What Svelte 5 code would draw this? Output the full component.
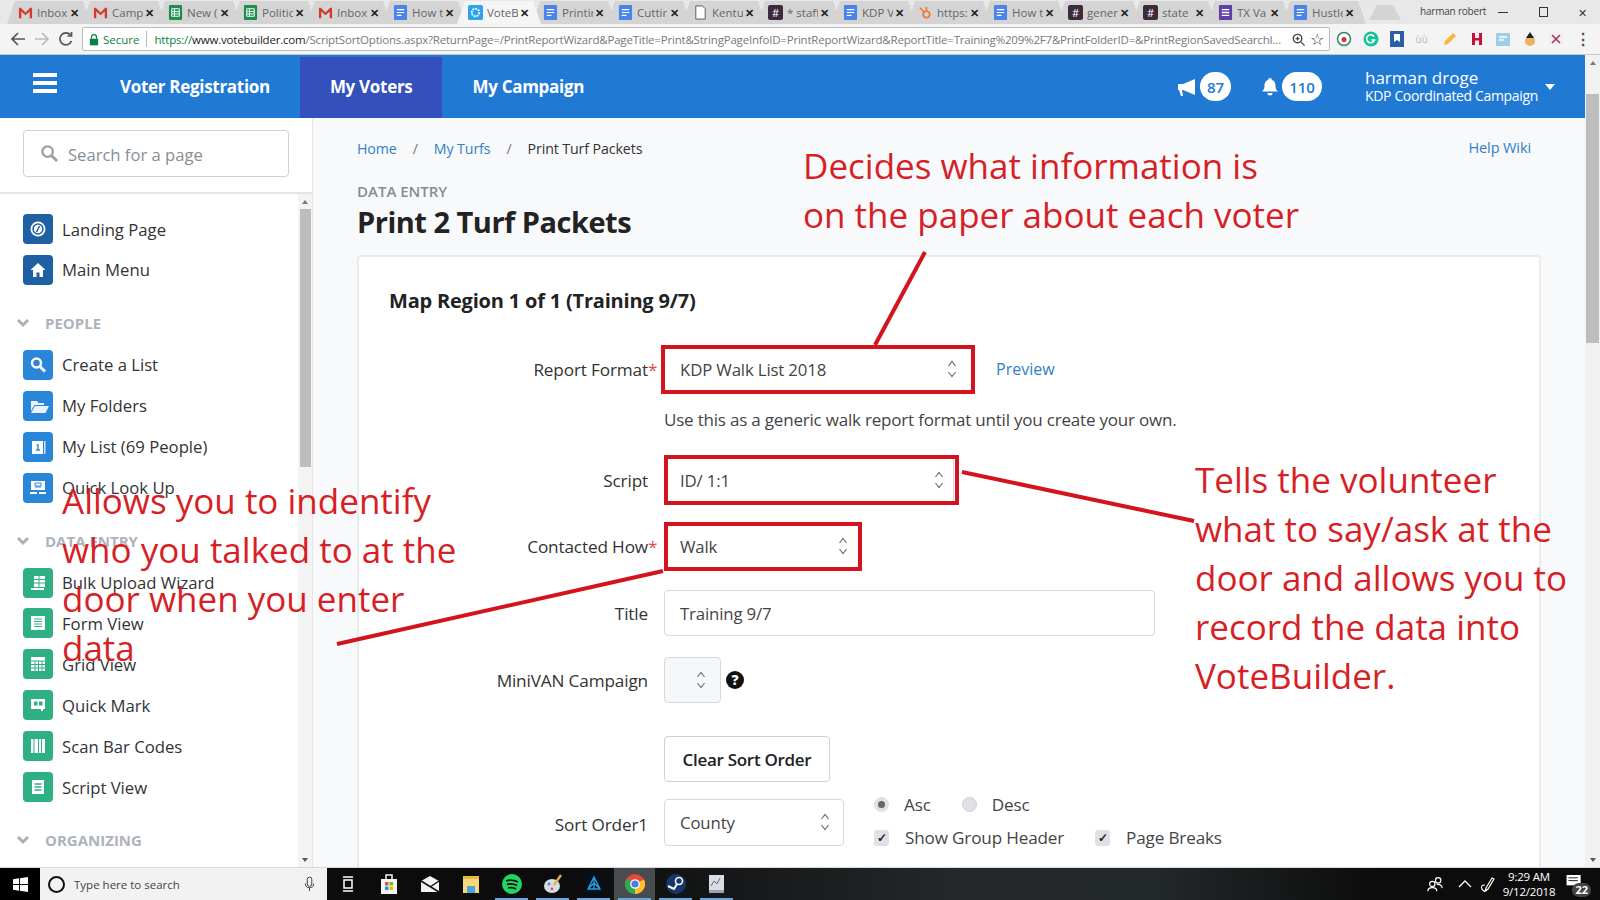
<script>
	const tabs = [
		{ kind: 'gmail', label: 'Inbox' },
		{ kind: 'gmail', label: 'Camp' },
		{ kind: 'sheet', label: 'New (' },
		{ kind: 'sheet', label: 'Politic' },
		{ kind: 'gmail', label: 'Inbox' },
		{ kind: 'doc', label: 'How t' },
		{ kind: 'vote', label: 'VoteB', active: true },
		{ kind: 'doc', label: 'Printir' },
		{ kind: 'doc', label: 'Cuttir' },
		{ kind: 'page', label: 'Kentu' },
		{ kind: 'slack', label: '* staff' },
		{ kind: 'doc', label: 'KDP V' },
		{ kind: 'hub', label: 'https:' },
		{ kind: 'doc', label: 'How t' },
		{ kind: 'slack', label: 'gener' },
		{ kind: 'slack', label: 'state' },
		{ kind: 'form', label: 'TX Va' },
		{ kind: 'doc', label: 'Hustle' }
	];

	const sections = [
		{
			title: null,
			color: 'navy',
			items: [
				{ icon: 'gauge', label: 'Landing Page' },
				{ icon: 'home', label: 'Main Menu' }
			]
		},
		{
			title: 'PEOPLE',
			color: 'blue',
			items: [
				{ icon: 'search', label: 'Create a List' },
				{ icon: 'folder', label: 'My Folders' },
				{ icon: 'list', label: 'My List (69 People)' },
				{ icon: 'lookup', label: 'Quick Look Up' }
			]
		},
		{
			title: 'DATA ENTRY',
			color: 'green',
			items: [
				{ icon: 'bulk', label: 'Bulk Upload Wizard' },
				{ icon: 'form', label: 'Form View' },
				{ icon: 'grid', label: 'Grid View' },
				{ icon: 'mark', label: 'Quick Mark' },
				{ icon: 'bars', label: 'Scan Bar Codes' },
				{ icon: 'script', label: 'Script View' }
			]
		},
		{ title: 'ORGANIZING', color: 'blue', items: [] }
	];

	const dock = ['task', 'store', 'mail', 'files', 'spotify', 'paint', 'app', 'chrome', 'steam', 'monitor'];

	const notes = [
		{ cls: 'note-top', text: 'Decides what information is\non the paper about each voter' },
		{ cls: 'note-right', text: 'Tells the volunteer\nwhat to say/ask at the\ndoor and allows you to\nrecord the data into\nVoteBuilder.' },
		{ cls: 'note-left', text: 'Allows you to indentify\nwho you talked to at the\ndoor when you enter\ndata' }
	];
</script>

{#snippet chevrons()}
	<svg class="updown" viewBox="0 0 10 20" width="10" height="20">
		<path d="M1.5 7 5 2.5 8.5 7M1.5 13 5 17.5 8.5 13" fill="none" stroke="#667" stroke-width="1.1" />
	</svg>
{/snippet}

{#snippet favicon(kind)}
	{#if kind === 'gmail'}
		<svg viewBox="0 0 16 16" width="15" height="15"><path d="M1 14V3h2l5 5 5-5h2v11h-2.500V7L8 11 3.500 7v7z" fill="#d33b2c" /></svg>
	{:else if kind === 'sheet'}
		<svg viewBox="0 0 16 16" width="15" height="15"><rect x="1" y="0" width="14" height="16" rx="1" fill="#1e8e4e" /><path d="M4 4h8v8H4zM4 7h8M4 9.500h8M7 4v8" fill="none" stroke="#fff" /></svg>
	{:else if kind === 'doc'}
		<svg viewBox="0 0 16 16" width="15" height="15"><rect x="1" y="0" width="14" height="16" rx="1" fill="#4a84e8" /><path d="M4 5h8M4 8h8M4 11h5" stroke="#fff" stroke-width="1.300" /></svg>
	{:else if kind === 'vote'}
		<svg viewBox="0 0 16 16" width="15" height="15"><rect width="16" height="16" rx="2" fill="#2aa4ee" /><circle cx="8" cy="8" r="4" fill="none" stroke="#fff" stroke-width="2" stroke-dasharray="2 1" /></svg>
	{:else if kind === 'page'}
		<svg viewBox="0 0 16 16" width="15" height="15"><path d="M3 1h7l3 3v11H3z" fill="#fff" stroke="#555" /></svg>
	{:else if kind === 'slack'}
		<span class="slack">#</span>
	{:else if kind === 'hub'}
		<svg viewBox="0 0 16 16" width="15" height="15"><circle cx="9" cy="10" r="3.500" fill="none" stroke="#f0782d" stroke-width="2" /><path d="M9 6V2M6.500 7.500 2 3" stroke="#f0782d" stroke-width="1.600" /></svg>
	{:else}
		<svg viewBox="0 0 16 16" width="15" height="15"><rect x="1" width="14" height="16" rx="1" fill="#5f3fa8" /><path d="M4 5h8M4 8h8M4 11h8" stroke="#fff" stroke-width="1.400" /></svg>
	{/if}
{/snippet}

{#snippet navIcon(name)}
	<svg viewBox="0 0 30 30" width="30" height="30">
		{#if name === 'gauge'}
			<circle cx="15" cy="15" r="7.500" fill="#fff" /><circle cx="15" cy="15" r="5" fill="none" stroke="#1f5fa3" stroke-width="1.500" /><path d="m13.500 18 3-6" stroke="#1f5fa3" stroke-width="1.600" />
		{:else if name === 'home'}
			<path d="M15 8 7.500 15H10v7h3.500v-4.500h3V22H20v-7h2.500z" fill="#fff" />
		{:else if name === 'search'}
			<circle cx="13.500" cy="13" r="4.500" fill="none" stroke="#fff" stroke-width="2.400" /><path d="m17 16.500 5 5" stroke="#fff" stroke-width="3" />
		{:else if name === 'folder'}
			<path d="M8 10h6l1.500 2H21v2H11.500L8 20zM12 15h14l-3.500 7H8z" fill="#eaf3fc" />
		{:else if name === 'list'}
			<path d="M9 9h11v13H9z" fill="#fff" /><path d="M21 9h1.500v13H21z" fill="#cfe3f7" /><path d="M13 18h4M15 18v-5h-1.500" fill="none" stroke="#2a86d8" stroke-width="1.400" />
		{:else if name === 'lookup'}
			<path d="M8 8h14v9H8z" fill="#fff" /><path d="M12 10h6v3h-6zM12 14h6" fill="none" stroke="#2a86d8" /><path d="M7 19h7v2H7zM16 19h7v2h-7z" fill="#fff" />
		{:else if name === 'bulk'}
			<path d="M11 8h11v11H11z" fill="#fff" /><path d="M11 11.500h11M11 15h11M16 8v11" stroke="#2fb083" /><path d="M8 20h13v2H8z" fill="#fff" />
		{:else if name === 'form'}
			<path d="M8 8h14v14H8z" fill="#fff" /><path d="M11 11h8M11 13.500h8M11 16h8M11 18.500h8" stroke="#2fb083" stroke-width="1.200" />
		{:else if name === 'grid'}
			<path d="M8 8h14v14H8z" fill="#fff" /><path d="M8 12h14M8 15.500h14M8 19h14M12 12v10M15.500 12v10M19 12v10" stroke="#2fb083" />
		{:else if name === 'mark'}
			<path d="M8 9h14v10h-2v2h-2v-2H8z" fill="#fff" /><path d="M11 11.500h3.500v4H11zM16 11.500h3.500v4H16z" fill="#2fb083" />
		{:else if name === 'bars'}
			<path d="M8 8h2.500v14H8zM11.500 8H15v14h-3.500zM16 8h2v14h-2zM19 8h3v14h-3z" fill="#fff" />
		{:else}
			<path d="M9 8h12v14H9z" fill="#fff" /><path d="M11.500 12h7M11.500 15h7M11.500 18h7" stroke="#2fb083" stroke-width="1.400" />
		{/if}
	</svg>
{/snippet}

{#snippet dockIcon(name)}
	<svg viewBox="0 0 24 24" width="24" height="24">
		{#if name === 'task'}
			<path d="M7 5h10M7 19h10" stroke="#fff" stroke-width="1.500" /><rect x="8" y="8" width="8" height="8" fill="none" stroke="#fff" stroke-width="1.500" />
		{:else if name === 'store'}
			<path d="M4 7h16v15H4z" fill="#f4f4f4" /><path d="M9 7V3h6v4" fill="none" stroke="#f4f4f4" stroke-width="1.500" /><rect x="8" y="10" width="3.500" height="3.500" fill="#e8542b" /><rect x="12.500" y="10" width="3.500" height="3.500" fill="#76b82a" /><rect x="8" y="14.500" width="3.500" height="3.500" fill="#1d9be0" /><rect x="12.500" y="14.500" width="3.500" height="3.500" fill="#f5b800" />
		{:else if name === 'mail'}
			<path d="M3 9 12 4l9 5v11H3z" fill="#f2f2f2" /><path d="M3 9l18 11M21 9l-9 6" stroke="#111" stroke-width="1.500" fill="none" />
		{:else if name === 'files'}
			<path d="M4 4h16v17H4z" fill="#f6d77a" /><path d="M8 14h8v7H8z" fill="#4aa6d8" /><path d="M4 4h16v3H4z" fill="#e7b93f" />
		{:else if name === 'spotify'}
			<circle cx="12" cy="12" r="10" fill="#1ed760" /><path d="M6 9q6-2 12 1M7 12.500q5-1.500 10 1M8 16q4-1 8 1" fill="none" stroke="#111" stroke-width="1.700" />
		{:else if name === 'paint'}
			<ellipse cx="11" cy="14" rx="8" ry="7" fill="#d7dde2" /><circle cx="8" cy="12" r="1.400" fill="#2f8fdc" /><circle cx="11" cy="17" r="1.400" fill="#e05a3a" /><path d="m13 13 7-10" stroke="#e0b050" stroke-width="2.400" />
		{:else if name === 'app'}
			<rect x="3" y="1" width="18" height="22" fill="#04101c" /><path d="M12 5 18 17H6zM12 5v12M6 17l6-6 6 6" fill="none" stroke="#2a9be0" stroke-width="1.400" />
		{:else if name === 'chrome'}
			<circle cx="12" cy="12" r="10" fill="#e8483b" /><path d="M12 12 3.300 7A10 10 0 0 0 12 22z" fill="#34a853" /><path d="M12 12v10A10 10 0 0 0 21 7.500z" fill="#fbc02d" /><circle cx="12" cy="12" r="4.800" fill="#fff" /><circle cx="12" cy="12" r="3.600" fill="#3f82ed" />
		{:else if name === 'steam'}
			<circle cx="12" cy="12" r="10" fill="#14386b" /><circle cx="15" cy="9" r="3.500" fill="none" stroke="#fff" stroke-width="1.600" /><path d="m4 14 6 3 3-5" fill="none" stroke="#fff" stroke-width="2" />
		{:else}
			<rect x="4" y="3" width="15" height="15" fill="#d8dee4" /><path d="M6 14l3-5 3 3 3-6" fill="none" stroke="#668" /><path d="M4 18h15v3H4z" fill="#9aa4ae" />
		{/if}
	</svg>
{/snippet}

<div class="screen">
	<div class="tabstrip">
		<div class="tabs">
			{#each tabs as tab}
				<div class="tab" class:active={tab.active}>
					<span class="fav">{@render favicon(tab.kind)}</span>
					<span class="tab-label">{tab.label}</span>
					<span class="tab-x">✕</span>
				</div>
			{/each}
			<div class="tab new-tab"></div>
		</div>
		<span class="profile">harman robert</span>
		<div class="winctl">
			<span class="min"></span>
			<span class="restore"></span>
			<span class="close">✕</span>
		</div>
	</div>

	<div class="toolbar">
		<svg viewBox="0 0 18 18" width="18" height="18"><path d="M16 9H3M9 3 3 9l6 6" fill="none" stroke="#555" stroke-width="1.700" /></svg>
		<svg viewBox="0 0 18 18" width="18" height="18"><path d="M2 9h13M9 3l6 6-6 6" fill="none" stroke="#bbb" stroke-width="1.700" /></svg>
		<svg viewBox="0 0 18 18" width="18" height="18"><path d="M14.500 11A6 6 0 1 1 13.500 5M14.500 2v4h-4" fill="none" stroke="#555" stroke-width="1.700" /></svg>
		<div class="omnibox">
			<svg viewBox="0 0 12 14" width="10" height="13"><path d="M1 6h10v8H1z" fill="#0b8043" /><path d="M3 6V4a3 3 0 0 1 6 0v2" fill="none" stroke="#0b8043" stroke-width="1.500" /></svg>
			<span class="secure">Secure</span>
			<span class="omni-sep"></span>
			<span class="url"><span class="https">https://</span><span class="host">www.votebuilder.com</span>/ScriptSortOptions.aspx?ReturnPage=/PrintReportWizard&amp;PageTitle=Print&amp;StringPageInfoID=PrintReportWizard&amp;ReportTitle=Training%209%2F7&amp;PrintFolderID=&amp;PrintRegionSavedSearchI...</span>
			<svg viewBox="0 0 16 16" width="15" height="15"><circle cx="7" cy="7" r="4.500" fill="none" stroke="#444" stroke-width="1.500" /><path d="m10.500 10.500 4 4M5 7h4M7 5v4" stroke="#444" stroke-width="1.400" /></svg>
			<span class="star">☆</span>
		</div>
		<div class="extensions">
			<svg viewBox="0 0 16 16" width="16" height="16"><circle cx="8" cy="8" r="6.500" fill="#fff" stroke="#2b8a6e" stroke-width="1.500" /><circle cx="8" cy="8.500" r="2.500" fill="#c33" /></svg>
			<svg viewBox="0 0 16 16" width="16" height="16"><circle cx="8" cy="8" r="7.500" fill="#15c39a" /><path d="M11 5.500A4 4 0 1 0 11.500 9H8.500" fill="none" stroke="#fff" stroke-width="1.600" /></svg>
			<svg viewBox="0 0 16 16" width="16" height="16"><rect x="1" width="14" height="16" fill="#2b5da8" /><path d="M5 3h6v8L8 9l-3 2z" fill="#fff" /></svg>
			<span class="ext-faint">ùù</span>
			<svg viewBox="0 0 16 16" width="16" height="16"><path d="m2 14 1-4 8-8 3 3-8 8z" fill="#f4b73f" /></svg>
			<svg viewBox="0 0 16 16" width="16" height="16"><path d="M3 2h3v5h4V2h3v12h-3V9.500H6V14H3z" fill="#c5123c" /></svg>
			<svg viewBox="0 0 16 16" width="16" height="16"><rect x="1" y="2" width="14" height="13" fill="#9bd0e6" /><path d="M4 6h8M4 9h5" stroke="#fff" stroke-width="1.500" /></svg>
			<svg viewBox="0 0 16 16" width="16" height="16"><circle cx="8" cy="10" r="5" fill="#e8b45f" /><path d="M4 7h8L8 1z" fill="#222" /></svg>
			<svg viewBox="0 0 16 16" width="16" height="16"><rect x="1" y="1" width="14" height="14" fill="#eef2f6" /><path d="m4 4 8 8M12 4l-8 8" stroke="#b5344a" stroke-width="1.600" /></svg>
			<span class="kebab">⋮</span>
		</div>
	</div>

	<div class="page">
		<div class="app">
			<header class="topbar">
				<div class="burger"><span></span><span></span><span></span></div>
				<nav class="topnav">
					<span class="top-link">Voter Registration</span>
					<span class="top-link current">My Voters</span>
					<span class="top-link">My Campaign</span>
				</nav>
				<div class="top-right">
					<svg viewBox="0 0 22 20" width="22" height="20"><path d="M1 7h5l12-5v16L6 13H5l1 6H4l-2-6H1z" fill="#fff" /></svg>
					<span class="badge">87</span>
					<svg class="bell" viewBox="0 0 20 20" width="20" height="20"><path d="M10 1a2 2 0 0 1 2 2c3 1 3.500 4 3.500 6 0 3 1 4 2.500 5.500H2C3.500 13 4.500 12 4.500 9c0-2 .5-5 3.500-6a2 2 0 0 1 2-2zM7.500 16h5a2.500 2.500 0 0 1-5 0z" fill="#fff" /></svg>
					<span class="badge wide">110</span>
					<div class="who">
						<span class="who-name">harman droge</span>
						<span class="who-org">KDP Coordinated Campaign</span>
					</div>
					<span class="caret"></span>
				</div>
			</header>

			<div class="body">
				<aside class="sidebar">
					<div class="search-wrap">
						<div class="search">
							<svg viewBox="0 0 20 20" width="19" height="19"><circle cx="8" cy="8" r="5.500" fill="none" stroke="#9aa0a6" stroke-width="2.400" /><path d="m12 12 6 6" stroke="#9aa0a6" stroke-width="3" /></svg>
							<span>Search for a page</span>
						</div>
					</div>
					<div class="side-scroll">
						<div class="side-list">
							{#each sections as section}
								{#if section.title}
									<div class="section-title">
										<svg viewBox="0 0 14 10" width="14" height="10"><path d="m2 2 5 5 5-5" fill="none" stroke="#aab0b6" stroke-width="3" /></svg>
										<span>{section.title}</span>
									</div>
								{/if}
								{#each section.items as item}
									<div class="side-item">
										<span class="side-icon {section.color}">{@render navIcon(item.icon)}</span>
										<span>{item.label}</span>
									</div>
								{/each}
							{/each}
						</div>
						<div class="side-track">
							<span class="arrow-up"></span>
							<span class="side-thumb"></span>
							<span class="arrow-down"></span>
						</div>
					</div>
				</aside>

				<main class="content">
					<div class="crumbs">
						<a href="#home">Home</a><i>/</i><a href="#turfs">My Turfs</a><i>/</i><span>Print Turf Packets</span>
						<a class="help" href="#help">Help Wiki</a>
					</div>
					<div class="eyebrow">DATA ENTRY</div>
					<h1>Print 2 Turf Packets</h1>
					<section class="card">
						<h2>Map Region 1 of 1 (Training 9/7)</h2>

						<div class="row r-report">
							<label>Report Format<b>*</b></label>
							<div class="select report">KDP Walk List 2018 {@render chevrons()}</div>
							<a class="preview" href="#preview">Preview</a>
						</div>
						<p class="hint">Use this as a generic walk report format until you create your own.</p>
						<div class="row r-script">
							<label>Script</label>
							<div class="select script">ID/ 1:1 {@render chevrons()}</div>
						</div>
						<div class="row r-how">
							<label>Contacted How<b>*</b></label>
							<div class="select how">Walk {@render chevrons()}</div>
						</div>
						<div class="row r-title">
							<label>Title</label>
							<div class="select title">Training 9/7</div>
						</div>
						<div class="row r-mini">
							<label>MiniVAN Campaign</label>
							<div class="select mini">{@render chevrons()}</div>
							<span class="qmark">?</span>
						</div>
						<div class="row r-clear">
							<label></label>
							<button class="clear">Clear Sort Order</button>
						</div>
						<div class="row r-sort">
							<label>Sort Order1</label>
							<div class="select sort">County {@render chevrons()}</div>
							<div class="sort-opts">
								<div class="opt-line">
									<span class="radio on"></span><span class="opt-a">Asc</span>
									<span class="radio"></span><span>Desc</span>
								</div>
								<div class="opt-line">
									<span class="check">✓</span><span class="opt-b">Show Group Header</span>
									<span class="check">✓</span><span>Page Breaks</span>
								</div>
							</div>
						</div>
					</section>
				</main>
			</div>
		</div>
		<div class="page-scroll">
			<span class="arrow-up"></span>
			<span class="page-thumb"></span>
			<span class="arrow-down"></span>
		</div>
	</div>

	<div class="taskbar">
		<div class="start">
			<svg viewBox="0 0 16 16" width="15" height="15"><path d="M0 2.300 6.500 1.400V7.500H0zM7.500 1.300 16 0V7.500H7.500zM0 8.500H6.500V14.600L0 13.700zM7.500 8.500H16V16L7.500 14.700z" fill="#fff" /></svg>
		</div>
		<div class="task-search">
			<span class="cortana"></span>
			<span class="task-text">Type here to search</span>
			<svg viewBox="0 0 12 18" width="11" height="17"><rect x="3.500" y="1" width="5" height="10" rx="2.500" fill="none" stroke="#333" /><path d="M1.500 8a4.500 4.500 0 0 0 9 0M6 13v3" fill="none" stroke="#333" /></svg>
		</div>
		<div class="dock">
			{#each dock as name, i}
				<span class="dock-item" class:focused={name === 'chrome'} class:running={i > 3}>{@render dockIcon(name)}</span>
			{/each}
		</div>
		<div class="tray">
			<svg viewBox="0 0 20 20" width="18" height="18"><circle cx="7" cy="10" r="3" fill="none" stroke="#fff" stroke-width="1.300" /><circle cx="13.500" cy="6" r="3" fill="none" stroke="#fff" stroke-width="1.300" /><path d="M2 18q0-4 5-4t5 4M12 10.500q5-.5 6 4" fill="none" stroke="#fff" stroke-width="1.300" /></svg>
			<svg class="tray-caret" viewBox="0 0 14 10" width="14" height="10"><path d="m1 8 6-6 6 6" fill="none" stroke="#fff" stroke-width="1.300" /></svg>
			<svg class="tray-pen" viewBox="0 0 16 18" width="16" height="18"><path d="m6 13 6-10 2 1-6 10-3 2zM5 10q-5 0-3 4t5 1" fill="none" stroke="#fff" stroke-width="1.200" /></svg>
			<div class="clock"><span>9:29 AM</span><span>9/12/2018</span></div>
			<div class="notify">
				<svg viewBox="0 0 18 16" width="18" height="15"><path d="M0 0h15v11H0z" fill="#fff" /><path d="M2 3h10M2 6h10" stroke="#111" /></svg>
				<span class="notify-count">22</span>
			</div>
		</div>
	</div>

	<svg class="marks" viewBox="0 0 1600 900" width="1600" height="900">
		<rect x="663" y="347" width="310" height="45" />
		<rect x="666" y="457" width="291" height="46" />
		<rect x="666" y="524" width="194" height="45" />
		<path d="M925 252 875 345M962 472 1194 521M663 571 337 644" />
	</svg>
	{#each notes as note}
		<div class="note {note.cls}">{note.text}</div>
	{/each}
</div>

<style>
	:global(body) {
		margin: 0;
		background: #fff;
	}

	.screen {
		position: relative;
		width: 1600px;
		height: 900px;
		overflow: hidden;
		display: flex;
		flex-direction: column;
		font-family: "Open Sans", "Noto Sans", sans-serif;
		color: #333;
	}

	/* browser chrome */
	.tabstrip {
		height: 24px;
		flex-shrink: 0;
		display: flex;
		background: #e8e8e8;
		align-items: flex-end;
	}

	.tabs {
		display: flex;
		padding-left: 7px;
		width: 1400px;
	}

	.tab {
		width: 84px;
		margin-right: -9px;
		height: 23px;
		box-sizing: border-box;
		padding: 0 12px 0 11px;
		display: flex;
		align-items: center;
		background: #d4d4d4;
		clip-path: polygon(0 100%, 8px 0, calc(100% - 8px) 0, 100% 100%);
		font-size: 11.500px;
		color: #666;
		white-space: nowrap;
	}

	.tab.active {
		background: #f5f5f5;
		position: relative;
		z-index: 1;
	}

	.new-tab {
		width: 32px;
		height: 15px;
		margin-left: 12px;
		background: #d4d4d4;
		align-self: center;
	}

	.fav {
		display: flex;
		flex-shrink: 0;
		margin-right: 4px;
	}

	.slack {
		width: 15px;
		height: 15px;
		border-radius: 2px;
		background: #3d2b3d;
		color: #fff;
		font-size: 11px;
		text-align: center;
		line-height: 15px;
	}

	.tab-label {
		flex: 1;
		overflow: hidden;
	}

	.tab-x {
		font-size: 11px;
		color: #222;
		font-weight: 700;
		margin-left: 2px;
	}

	.profile {
		position: absolute;
		left: 1420px;
		top: 4px;
		font-size: 10px;
		color: #444;
		letter-spacing: -0.2px;
		white-space: nowrap;
	}

	.winctl {
		position: absolute;
		left: 1495px;
		top: 0;
		width: 100px;
		height: 24px;
		display: flex;
		align-items: center;
		justify-content: space-between;
		padding-right: 8px;
		box-sizing: border-box;
	}

	.min {
		width: 10px;
		height: 1px;
		background: #333;
		margin-left: 3px;
	}

	.restore {
		width: 7px;
		height: 8px;
		border: 1px solid #333;
	}

	.close {
		font-size: 11px;
		color: #333;
	}

	.toolbar {
		height: 31px;
		flex-shrink: 0;
		background: #f4f4f4;
		border-bottom: 1px solid #c8c8c8;
		box-sizing: border-box;
		display: flex;
		align-items: center;
		gap: 6px;
		padding-left: 9px;
	}

	.omnibox {
		width: 1248px;
		height: 24px;
		margin-left: 1px;
		box-sizing: border-box;
		border: 1px solid #bbb;
		border-radius: 2px;
		background: #fff;
		display: flex;
		align-items: center;
		padding: 0 5px 0 6px;
		font-size: 11.500px;
		white-space: nowrap;
		gap: 4px;
	}

	.secure {
		color: #0b8043;
	}

	.omni-sep {
		width: 1px;
		height: 16px;
		background: #bbb;
		margin: 0 3px;
	}

	.url {
		flex: 1;
		overflow: hidden;
		color: #777;
		letter-spacing: -0.2px;
	}

	.https {
		color: #0b8043;
	}

	.host {
		color: #222;
	}

	.star {
		font-size: 16px;
		color: #333;
		line-height: 16px;
	}

	.extensions {
		display: flex;
		align-items: center;
		gap: 10.500px;
		margin-left: 0;
	}

	.ext-faint {
		font-size: 10px;
		color: #bbb;
		width: 16px;
	}

	.kebab {
		font-size: 16px;
		font-weight: 700;
		color: #555;
		line-height: 16px;
	}

	/* page */
	.page {
		flex: 1;
		min-height: 0;
		display: flex;
	}

	.app {
		flex: 1;
		min-width: 0;
		display: flex;
		flex-direction: column;
	}

	.topbar {
		height: 63px;
		flex-shrink: 0;
		background: #207ad4;
		color: #fff;
		display: flex;
		align-items: stretch;
	}

	.burger {
		width: 24px;
		margin: 18px 0 0 33px;
		display: flex;
		flex-direction: column;
		gap: 4px;
	}

	.burger span {
		height: 4px;
		background: #fff;
	}

	.topnav {
		display: flex;
		margin-left: 33px;
		font-weight: 700;
		font-size: 17px;
	}

	.top-link {
		padding: 0 30px;
		display: flex;
		align-items: center;
		letter-spacing: -0.3px;
	}

	.top-link.current {
		background: #3350bd;
		margin-top: 2px;
		padding-bottom: 2px;
	}

	.top-right {
		margin-left: auto;
		display: flex;
		align-items: center;
		padding-right: 30px;
	}

	.badge {
		width: 31px;
		height: 29px;
		border-radius: 15px;
		background: #fff;
		color: #207ad4;
		font-weight: 600;
		font-size: 15px;
		display: flex;
		align-items: center;
		justify-content: center;
		margin-left: 1px;
	}

	.badge.wide {
		width: 40px;
		margin-left: 2px;
	}

	.bell {
		margin-left: 29px;
	}

	.who {
		margin-left: 43px;
		display: flex;
		flex-direction: column;
		width: 175px;
		white-space: nowrap;
		margin-top: -3px;
	}

	.who-name {
		font-size: 17px;
		line-height: 21px;
	}

	.who-org {
		font-size: 14px;
		line-height: 16px;
		letter-spacing: -0.35px;
	}

	.caret {
		width: 0;
		height: 0;
		border: 5px solid transparent;
		border-top: 6px solid #fff;
		border-bottom: 0;
		margin-left: 5px;
	}

	.body {
		flex: 1;
		min-height: 0;
		display: flex;
		position: relative;
	}

	.sidebar {
		width: 313px;
		flex-shrink: 0;
		box-sizing: border-box;
		border-right: 1px solid #e4e6ea;
		background: #fff;
		display: flex;
		flex-direction: column;
		min-height: 0;
	}

	.search-wrap {
		height: 76px;
		flex-shrink: 0;
		box-sizing: border-box;
		border-bottom: 2px solid #e2e4e7;
		padding: 12px 23px 0;
	}

	.search {
		width: 266px;
		height: 47px;
		box-sizing: border-box;
		border: 1.500px solid #cfd3d7;
		border-radius: 4px;
		display: flex;
		align-items: center;
		gap: 9px;
		padding-left: 16px;
		font-size: 16.600px;
		color: #868e96;
	}

	.search span {
		margin-top: 2px;
	}

	.side-scroll {
		flex: 1;
		min-height: 0;
		display: flex;
	}

	.side-list {
		flex: 1;
		padding-top: 20px;
		overflow: hidden;
	}

	.side-item {
		height: 30px;
		margin: 0 0 10.900px 23px;
		display: flex;
		align-items: center;
		gap: 9px;
		font-size: 16.700px;
		color: #333;
		white-space: nowrap;
	}

	.side-icon {
		width: 30px;
		height: 30px;
		border-radius: 4px;
		display: block;
		flex-shrink: 0;
	}

	.side-icon svg {
		display: block;
	}

	.navy {
		background: #1f5fa3;
	}

	.blue {
		background: #2a86d8;
	}

	.green {
		background: #2fb083;
	}

	.section-title {
		height: 20px;
		margin: 28px 0 17px 16px;
		display: flex;
		align-items: center;
		gap: 15px;
		font-size: 15px;
		font-weight: 700;
		color: #adb3b9;
		white-space: nowrap;
	}

	.side-track,
	.page-scroll {
		flex-shrink: 0;
		background: #f1f1f1;
		display: flex;
		flex-direction: column;
		align-items: center;
	}

	.side-track {
		width: 14px;
		background: #f3f3f4;
	}

	.side-thumb {
		width: 11px;
		height: 258px;
		background: #bdbdbd;
		margin-top: 5px;
	}

	.arrow-up,
	.arrow-down {
		width: 0;
		height: 0;
		border: 3.500px solid transparent;
		flex-shrink: 0;
	}

	.arrow-up {
		border-bottom: 4px solid #777;
		border-top: 0;
		margin-top: 6px;
	}

	.arrow-down {
		border-top: 4px solid #555;
		border-bottom: 0;
		margin-top: auto;
		margin-bottom: 5px;
	}

	.page-scroll {
		width: 15px;
	}

	.page-thumb {
		width: 13px;
		height: 249px;
		margin-top: 29px;
		background: #bdbdbd;
	}

	.content {
		flex: 1;
		min-width: 0;
		background: #f8f9fb;
		padding: 0 45px 0 44px;
		overflow: hidden;
	}

	.crumbs {
		height: 60px;
		padding-top: 21px;
		box-sizing: border-box;
		display: flex;
		font-size: 14.200px;
		line-height: 20px;
		letter-spacing: -0.1px;
	}

	.crumbs a {
		color: #2f7fc9;
		text-decoration: none;
	}

	.crumbs i {
		font-style: normal;
		color: #777;
		margin: 0 16px;
	}

	.crumbs .help {
		margin-left: auto;
		margin-right: 9px;
		margin-top: -1px;
		font-size: 14.500px;
	}

	.eyebrow {
		font-size: 15px;
		font-weight: 600;
		color: #868c92;
		line-height: 20px;
		margin-top: 3px;
	}

	h1 {
		margin: 1px 0 0;
		font-size: 29px;
		line-height: 40px;
		font-weight: 700;
		color: #222;
		letter-spacing: -0.5px;
	}

	.card {
		margin-top: 13px;
		height: 700px;
		width: 1184px;
		box-sizing: border-box;
		background: #fff;
		border: 2px solid #e9ebee;
		border-radius: 4px;
		padding: 0 30px;
	}

	h2 {
		margin: 31px 0 0;
		font-size: 20px;
		line-height: 26px;
		font-weight: 700;
		color: #222;
		letter-spacing: -0.2px;
	}

	.row {
		display: flex;
		align-items: center;
	}

	.row label {
		width: 259px;
		margin-right: 16px;
		text-align: right;
		font-size: 17.200px;
		font-weight: 500;
		color: #333;
		letter-spacing: -0.15px;
		flex-shrink: 0;
		position: relative;
	}

	.row label b {
		position: absolute;
		color: #dc4a4a;
		font-weight: 400;
		margin-left: 0;
	}

	.select {
		height: 46px;
		box-sizing: border-box;
		border: 1.500px solid #d5d8dc;
		border-radius: 4px;
		background: #fff;
		display: flex;
		align-items: center;
		justify-content: space-between;
		padding: 0 12px 0 15px;
		font-size: 16.800px;
		color: #444;
		letter-spacing: -0.15px;
	}

	.report {
		width: 308px;
		padding-right: 14px;
	}

	.preview {
		margin-left: 24px;
		font-size: 16px;
		color: #2f7fc9;
		text-decoration: none;
	}

	.hint {
		margin: 16px 0 0 275px;
		font-size: 17px;
		line-height: 24px;
		color: #444;
		letter-spacing: -0.2px;
	}

	.r-report {
		margin-top: 32px;
	}

	.r-script {
		margin-top: 25px;
	}

	.r-how {
		margin-top: 20px;
	}

	.r-title {
		margin-top: 21px;
	}

	.r-mini {
		margin-top: 21px;
	}

	.r-clear {
		margin-top: 33px;
	}

	.r-sort {
		margin-top: 14px;
	}

	.r-sort label {
		padding-top: 4px;
	}

	.script {
		width: 290px;
		padding-right: 9px;
	}

	.how {
		width: 195px;
		padding-right: 10px;
	}

	.title {
		width: 491px;
	}

	.mini {
		width: 57px;
		background: #f6f7f9;
		justify-content: flex-end;
		padding-right: 14px;
	}

	.sort {
		width: 180px;
		height: 47px;
		padding-right: 13px;
	}

	.qmark {
		width: 18px;
		height: 18px;
		border-radius: 50%;
		background: #111;
		color: #fff;
		font-size: 14px;
		font-weight: 800;
		text-align: center;
		line-height: 18px;
		margin-left: 5px;
	}

	.updown {
		display: block;
		flex-shrink: 0;
	}

	.clear {
		height: 46px;
		width: 166px;
		box-sizing: border-box;
		padding: 0;
		border: 1.500px solid #cfd3d7;
		border-radius: 4px;
		background: #fff;
		font: 600 17px "Open Sans", sans-serif;
		letter-spacing: -0.3px;
		color: #222;
	}

	.sort-opts {
		margin: -2px 0 0 30px;
		display: flex;
		flex-direction: column;
		gap: 12px;
		font-size: 17.100px;
		letter-spacing: -0.15px;
		color: #444;
	}

	.opt-line {
		display: flex;
		align-items: center;
		height: 21px;
	}

	.radio {
		width: 15px;
		height: 15px;
		border-radius: 50%;
		background: #dfe1e4;
		margin-right: 15px;
		box-sizing: border-box;
		border: 1px solid #cfd2d6;
	}

	.radio.on {
		border: 4px solid #dfe1e4;
		background: #666;
	}

	.opt-a {
		margin-right: 31px;
	}

	.opt-b {
		margin-right: 31px;
	}

	.check {
		width: 15px;
		height: 16px;
		border-radius: 3px;
		background: #dfe1e4;
		margin-right: 16px;
		font-size: 12px;
		font-weight: 700;
		line-height: 16px;
		text-align: center;
		color: #222;
	}

	/* taskbar */
	.taskbar {
		height: 33px;
		flex-shrink: 0;
		border-top: 1px solid #d8d8d8;
		box-sizing: border-box;
		background: linear-gradient(90deg, #0c0c0c 0%, #0c0c0c 36%, #24282a 60%, #23282a 72%, #0c0c0c 86%);
		display: flex;
		align-items: stretch;
	}

	.start {
		width: 40px;
		display: flex;
		align-items: center;
		justify-content: center;
		background: #000;
	}

	.task-search {
		width: 287px;
		background: #f2f2f2;
		display: flex;
		align-items: center;
		padding: 0 12px 0 8px;
		box-sizing: border-box;
		gap: 9px;
		font-size: 11.500px;
		color: #444;
	}

	.cortana {
		width: 17px;
		height: 17px;
		box-sizing: border-box;
		border: 2.500px solid #111;
		border-radius: 50%;
	}

	.task-text {
		flex: 1;
	}

	.dock {
		display: flex;
		margin-left: 0;
	}

	.dock-item {
		width: 41px;
		display: flex;
		align-items: center;
		justify-content: center;
		position: relative;
	}

	.dock-item.focused {
		background: #484c4f;
	}

	.dock-item.running::after {
		content: "";
		position: absolute;
		left: 4px;
		right: 4px;
		bottom: 0;
		height: 2px;
		background: #6aa7de;
	}

	.tray {
		margin-left: auto;
		display: flex;
		align-items: center;
		color: #fff;
		padding-right: 8px;
	}

	.tray-caret {
		margin-left: 14px;
	}

	.tray-pen {
		margin-left: 8px;
	}

	.clock {
		width: 66px;
		display: flex;
		flex-direction: column;
		align-items: center;
		font-size: 11.500px;
		line-height: 15px;
		letter-spacing: -0.2px;
	}

	.notify {
		width: 30px;
		height: 26px;
		position: relative;
		padding: 2px 0 0 4px;
		box-sizing: border-box;
	}

	.notify-count {
		position: absolute;
		right: 1px;
		bottom: 0;
		padding: 0 3px;
		border-radius: 8px;
		background: #444;
		font-size: 11px;
		font-weight: 700;
		line-height: 14px;
	}

	/* annotations drawn over the screenshot */
	.marks {
		position: absolute;
		inset: 0;
		pointer-events: none;
		fill: none;
		stroke: #d3141f;
		stroke-width: 4;
	}

	.note {
		position: absolute;
		white-space: pre;
		color: #d61f26;
		font-size: 35px;
		line-height: 49px;
	}

	.note-top {
		left: 803px;
		top: 141px;
	}

	.note-right {
		left: 1195px;
		top: 455px;
	}

	.note-left {
		left: 62px;
		top: 476px;
	}
</style>
